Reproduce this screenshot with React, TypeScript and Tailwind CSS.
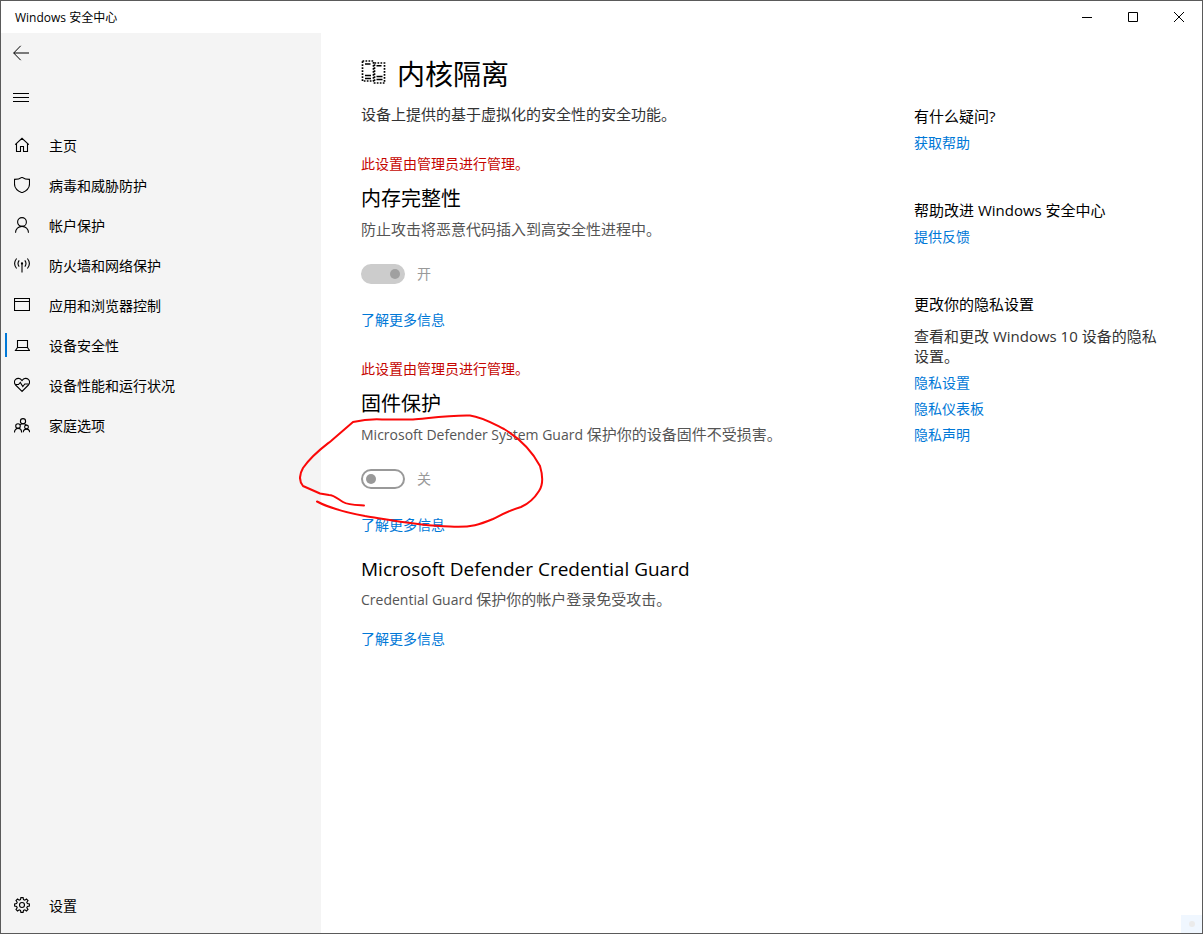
import type { ReactNode } from "react"

const navItems = [
  { id: "home", label: "主页" },
  { id: "virus", label: "病毒和威胁防护" },
  { id: "account", label: "帐户保护" },
  { id: "firewall", label: "防火墙和网络保护" },
  { id: "app", label: "应用和浏览器控制" },
  { id: "device", label: "设备安全性" },
  { id: "health", label: "设备性能和运行状况" },
  { id: "family", label: "家庭选项" },
]

const iconPaths: Record<string, ReactNode> = {
  home: <path d="M1.2 7.6 8 1.3l6.8 6.3M2.5 6.8v7.7h4V9.5h3v5h4V6.8" />,
  virus: <path d="M8 .3C6 1.700 3.500 2.400.5 2.400V7c0 4 2.900 6.900 7.500 8.700 4.600-1.800 7.500-4.700 7.500-8.700V2.400C12.500 2.400 10 1.700 8 .3Z" />,
  account: (
    <>
      <circle cx="8" cy="5" r="4.400" />
      <path d="M1.500 15.800c0-3.700 2.900-6.400 6.500-6.400s6.500 2.700 6.500 6.400" />
    </>
  ),
  firewall: (
    <>
      <path d="M8 6.500V15.500M2.600 1.500C.2 4.500.2 8.500 2.600 11.500M13.400 1.500c2.400 3 2.400 7 0 10M5.200 3.300c-1.500 2-1.500 4.400 0 6.400M10.800 3.300c1.500 2 1.500 4.400 0 6.400" />
      <circle cx="8" cy="6.500" r=".6" />
    </>
  ),
  app: <path d="M.5 1.500h15v12H.5zM.5 4.500h15" />,
  device: <path d="M3.500 3.500h10v7h-10zM3.500 10.500l-2 3h14l-2-3" />,
  health: (
    <>
      <path d="M8 14.400 1.600 8C-.1 6.200.1 3.700 1.600 2.400c1.700-1.500 4.300-1.300 5.600.3L8 3.600l.8-.9c1.300-1.600 3.900-1.800 5.600-.3 1.500 1.300 1.700 3.800 0 5.600Z" />
      <path d="M1.500 7.500h3l1.800-2 2.500 4 2-2.500h3.700" />
    </>
  ),
  family: (
    <>
      <circle cx="9" cy="4.200" r="2.600" />
      <circle cx="4" cy="9" r="2.300" />
      <circle cx="12.500" cy="10" r="1.900" />
      <path d="M.5 15.400c0-2.300 1.500-4 3.500-4s3.600 1.700 3.600 4M9.300 15.200c0-1.900 1.300-3.100 3.200-3.100s3.100 1.200 3.100 3.100M5.900 7.900C6.700 7.200 7.700 6.800 9 6.800c2 0 3 .7 3.500 1.400" />
    </>
  ),
  settings: (
    <>
      <circle cx="8" cy="8" r="2.500" />
      <path d="M6.900.6h2.200l.4 2 1.300.6 1.700-1.200 1.500 1.500-1.200 1.700.6 1.300 2 .4v2.200l-2 .4-.6 1.300 1.200 1.700-1.500 1.500-1.700-1.200-1.300.6-.4 2H6.900l-.4-2-1.300-.6L3.500 14 2 12.500l1.200-1.700-.6-1.300-2-.4V6.900l2-.4.6-1.300L2 3.500 3.500 2l1.700 1.200 1.300-.6Z" />
    </>
  ),
}

function Icon({ id }: { id: string }) {
  return (
    <svg className="size-4 shrink-0" viewBox="0 0 16 16" fill="none" stroke="currentColor" strokeWidth="1.1" aria-hidden="true">
      {iconPaths[id]}
    </svg>
  )
}

function NavItem({ id, label, active }: { id: string; label: string; active?: boolean }) {
  return (
    <a href={`#${id}`} className="flex h-10 items-center pl-1 text-sm">
      <span className={active ? "h-6 w-0.5 bg-[#0078d7]" : "h-6 w-0.5"} />
      <span className="flex items-center gap-[19px] pl-[7px]">
        <Icon id={id} />
        <span className="pt-0.5">{label}</span>
      </span>
    </a>
  )
}

function Link({ children }: { children: ReactNode }) {
  return (
    <a href="#" className="block w-fit text-sm leading-5 text-[#0078d7]">
      {children}
    </a>
  )
}

// product names sit a step smaller than the chinese text after them
function Product({ children }: { children: ReactNode }) {
  return <span className="text-sm leading-none">{children}</span>
}

function Toggle({ id, label, on }: { id: string; label: string; on?: boolean }) {
  return (
    <div className="mt-[25px] flex h-5 items-center gap-3">
      <span className="relative h-5 w-11">
        <input
          id={id}
          type="checkbox"
          disabled
          checked={on ?? false}
          readOnly
          className="block h-5 w-11 appearance-none rounded-full border-2 border-[#999] checked:border-[#ccc] checked:bg-[#ccc]"
        />
        <span className={`absolute top-[5px] size-2.5 rounded-full ${on ? "right-[5px] bg-[#a0a0a0]" : "left-[5px] bg-[#999]"}`} />
      </span>
      <label htmlFor={id} className="text-sm leading-5 text-[#999]">
        {label}
      </label>
    </div>
  )
}

type SectionProps = { title: ReactNode; desc: ReactNode; managed?: boolean; children?: ReactNode }

function Section({ title, desc, managed, children }: SectionProps) {
  return (
    <section className={managed ? "mt-[29px]" : "mt-5"}>
      {managed && <p className="mb-[11px] text-sm leading-5 text-[#c50500]">此设置由管理员进行管理。</p>}
      <h2 className="text-xl leading-7">{title}</h2>
      <p className="mt-1.5 text-[15px] leading-5 text-[#555]">{desc}</p>
      {children}
      <div className={managed ? "mt-[26px]" : "mt-5"}>
        <Link>了解更多信息</Link>
      </div>
    </section>
  )
}

// hand-drawn circle around the firmware protection switch
function RedMark() {
  return (
    <svg className="pointer-events-none absolute top-[52px] -left-[62px] h-[120px] w-[246px]" viewBox="299 411 246 120" fill="none" stroke="#fb0808" strokeWidth="2" strokeLinecap="round" strokeLinejoin="round" aria-hidden="true">
      <path d="M364 505.500C355 505 348 505 343 502C338 499 334 495 329 495L320 493.500L303 486C299 481 299 475 303 468C312 455 322 448 331 441L353 422C362 420 372 419 382 419.500H413C430 418 450 415 470 415.500C482 417 492 423 504 429C519 438 532 451 540 466C543 476 543 485 539 491C534 499 528 504 521 507C510 510 501 515 493 519C481 524 471 528 450 526.500C420 526 390 520 365 516C349 513 331 509 317 501.500" />
    </svg>
  )
}

export default function App() {
  return (
    <div className="flex min-h-screen flex-col border border-[#5a5a5a] bg-white font-['Open_Sans','Noto_Sans_CJK_SC',sans-serif] text-black">
      <header className="flex h-8 items-center justify-between pl-3.5 text-xs">
        <span className="pt-0.5">Windows 安全中心</span>
        <div className="flex">
          <button aria-label="最小化" className="flex h-8 w-[46px] items-center justify-center">
            <svg className="size-2.5" viewBox="0 0 10 10" stroke="#000" aria-hidden="true"><path d="M0 5.500h10" /></svg>
          </button>
          <button aria-label="最大化" className="flex h-8 w-[46px] items-center justify-center">
            <svg className="size-2.5" viewBox="0 0 10 10" fill="none" stroke="#000" aria-hidden="true"><path d="M.5.5h9v9h-9z" /></svg>
          </button>
          <button aria-label="关闭" className="flex h-8 w-[46px] items-center justify-center">
            <svg className="size-2.5" viewBox="0 0 10 10" stroke="#000" aria-hidden="true"><path d="m0 0 10 10M10 0 0 10" /></svg>
          </button>
        </div>
      </header>

      <div className="flex flex-1">
        <aside className="flex w-80 shrink-0 flex-col bg-[#f4f4f4]">
          <button aria-label="返回" className="flex h-10 w-10 items-center justify-center">
            <svg className="size-4" viewBox="0 0 16 16" fill="none" stroke="#000" aria-hidden="true"><path d="M16 8H.7M7.700.8.7 8l7 7.200" /></svg>
          </button>
          <button aria-label="菜单" className="mt-1 flex h-10 w-10 items-center justify-center">
            <svg className="size-4" viewBox="0 0 16 16" stroke="#000" aria-hidden="true"><path d="M0 4.500h16M0 8.500h16M0 12.500h16" /></svg>
          </button>
          <nav className="mt-2 flex-1">
            {navItems.map((item) => (
              <NavItem key={item.id} {...item} active={item.id === "device"} />
            ))}
          </nav>
          <div className="mb-2">
            <NavItem id="settings" label="设置" />
          </div>
        </aside>

        <main className="relative flex flex-1 items-start px-10">
          <div className="flex-1 pt-[23px]">
            <h1 className="flex items-center gap-[11px] text-[28px] leading-9">
              <svg className="mb-1 h-6 w-[25px]" viewBox="0 0 25 24" fill="none" stroke="#000" aria-hidden="true">
                <path strokeWidth="1.700" strokeDasharray="1.700 1.300" d="M1.500 1h11v20h-11zM13.500 3h10v20h-10z" />
                <path strokeWidth="1.500" d="M4 4h5.500M4 15.500h6M4 18.500h6M15.500 5.800h5M15.500 16.500h6M15.500 19.500h6" />
              </svg>
              内核隔离
            </h1>
            <p className="mt-3 text-[15px] leading-5 text-[#333]">设备上提供的基于虚拟化的安全性的安全功能。</p>

            <div className="mt-[30px]">
              <Section title="内存完整性" desc="防止攻击将恶意代码插入到高安全性进程中。" managed>
                <Toggle id="memory" label="开" on />
              </Section>
            </div>
            <div className="relative">
              <Section
                title="固件保护"
                desc={<><Product>Microsoft Defender System Guard </Product>保护你的设备固件不受损害。</>}
                managed
              >
                <Toggle id="firmware" label="关" />
              </Section>
              <RedMark />
            </div>
            <Section
              title={<span className="text-[19px]">Microsoft Defender Credential Guard</span>}
              desc={<><Product>Credential Guard </Product>保护你的帐户登录免受攻击。</>}
            />
          </div>

          <div className="w-[248px] shrink-0 pt-[73px] text-[15px] leading-5">
            <section>
              <h3 className="mb-[7px]">有什么疑问?</h3>
              <Link>获取帮助</Link>
            </section>
            <section className="mt-[47px]">
              <h3 className="mb-[7px]">帮助改进 Windows 安全中心</h3>
              <Link>提供反馈</Link>
            </section>
            <section className="mt-[47px]">
              <h3 className="mb-3">更改你的隐私设置</h3>
              <p className="mb-[7px] text-[#333]">查看和更改 Windows 10 设备的隐私设置。</p>
              <div className="flex flex-col gap-1.5">
                <Link>隐私设置</Link>
                <Link>隐私仪表板</Link>
                <Link>隐私声明</Link>
              </div>
            </section>
          </div>

          <div className="absolute right-0 bottom-0 flex h-[18px] w-[21px] items-center justify-center bg-[#f0f7ff]">
            <span className="size-1.5 rounded-full bg-[#ebebeb]" />
          </div>
        </main>
      </div>
    </div>
  )
}
